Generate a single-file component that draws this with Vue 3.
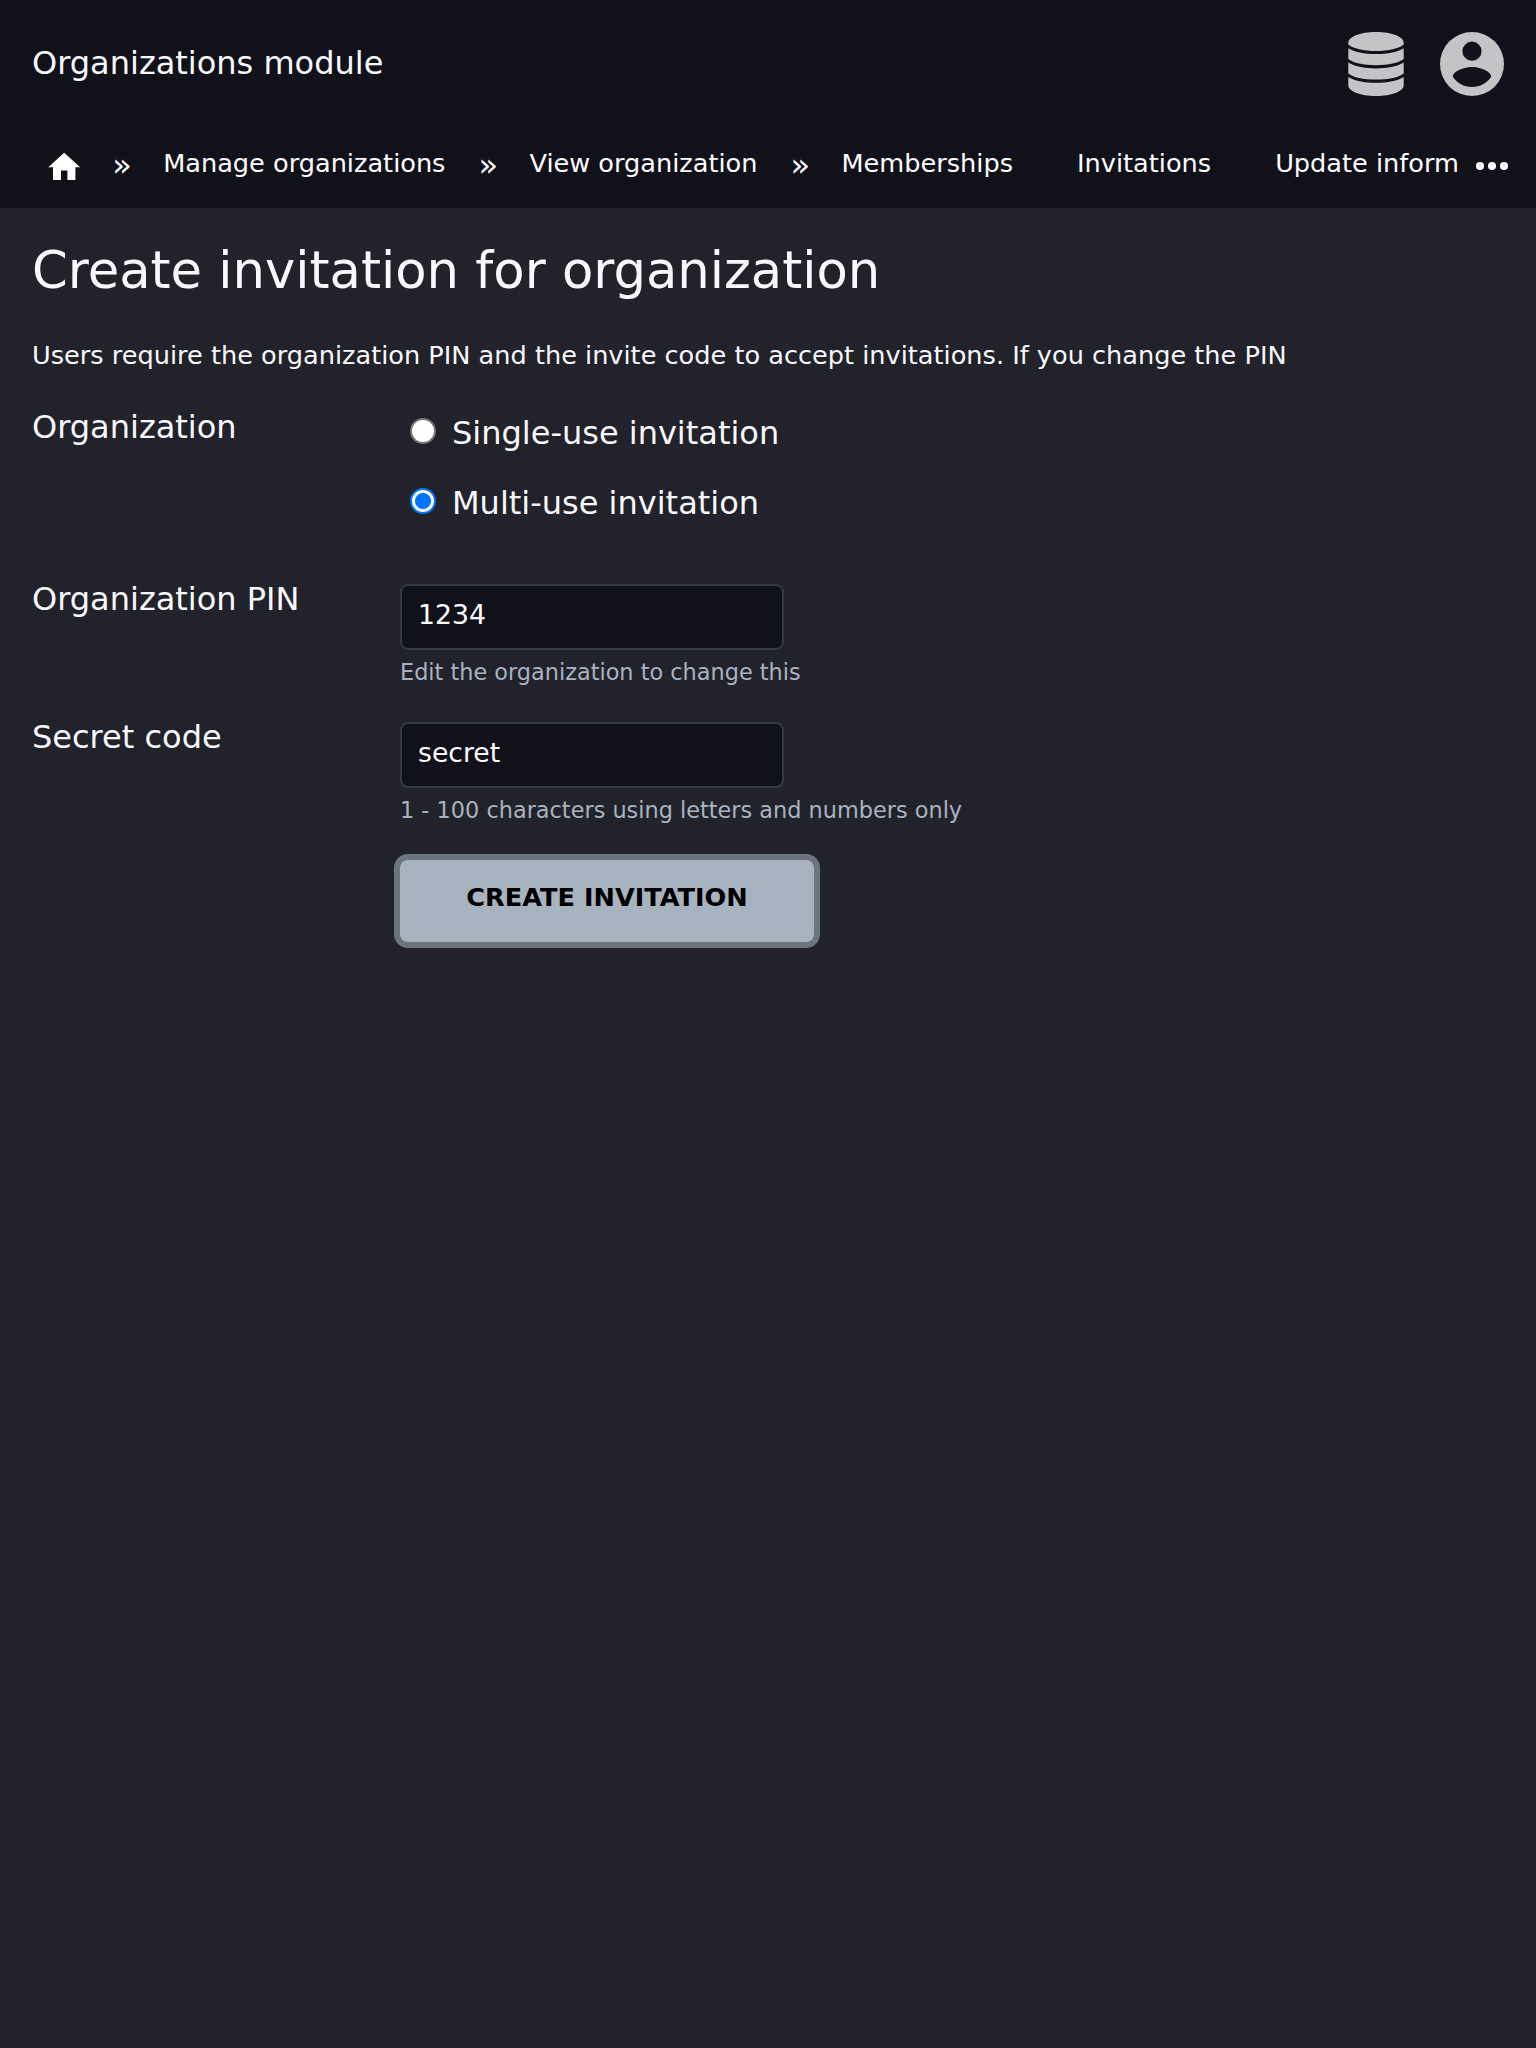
<script setup>
const crumbs = ['Manage organizations', 'View organization', 'Memberships']
const fields = [
  { id: 'pin', label: 'Organization PIN', value: '1234', hint: 'Edit the organization to change this' },
  { id: 'code', label: 'Secret code', value: 'secret', hint: '1 - 100 characters using letters and numbers only' },
]
const options = ['Single-use invitation', 'Multi-use invitation']
const selected = 1
</script>

<template>
  <div class="page">
    <header class="top">
      <div class="title">Organizations module</div>
      <div class="icons">
        <svg class="db" viewBox="0 0 56 64" width="56" height="64">
          <path d="M.3 10.500C.3 4.700 12.500 0 28 0s27.700 4.700 27.700 10.500v2C51 16.500 40.500 19 28 19S5 16.500.3 12.500z" />
          <path d="M.3 16.200C6 20 16 22 28 22s22-2 27.700-5.800v10.800C51 30.800 40.500 33.200 28 33.200S5 30.800.3 27z" />
          <path d="M.3 30.600C6 34.400 16 36.400 28 36.400s22-2 27.700-5.800v10.800C51 45.200 40.500 47.600 28 47.600S5 45.200.3 41.400z" />
          <path d="M.3 45C6 48.800 16 50.800 28 50.800s22-2 27.700-5.800v8.500C55.700 59.300 43.500 64 28 64S.3 59.300.3 53.500z" />
        </svg>
        <svg viewBox="2 2 20 20" width="64" height="64">
          <path fill-rule="evenodd" d="M12 2a10 10 0 1 0 0 20 10 10 0 0 0 0-20zm0 3a3 3 0 1 1 0 6 3 3 0 0 1 0-6zm0 14.200c-2.500 0-4.710-1.280-6-3.220.030-1.990 4-3.080 6-3.080 1.990 0 5.970 1.090 6 3.080-1.290 1.940-3.500 3.220-6 3.220z" />
        </svg>
      </div>
    </header>
    <nav class="nav">
      <svg class="home" viewBox="0 0 24 24" width="38.4" height="38.4">
        <path d="M10 20v-6h4v6h5v-8h3L12 3 2 12h3v8z" />
      </svg>
      <template v-for="c in crumbs" :key="c">
        <span class="sep">»</span>
        <a class="crumb">{{ c }}</a>
      </template>
      <a class="crumb tab">Invitations</a>
      <a class="crumb tab last">Update inform</a>
      <svg class="more" viewBox="0 0 32 8" width="32" height="8">
        <circle cx="4" cy="4" r="4" /><circle cx="16" cy="4" r="4" /><circle cx="28" cy="4" r="4" />
      </svg>
    </nav>
    <main>
      <h1>Create invitation for organization</h1>
      <p class="lead">Users require the organization PIN and the invite code to accept invitations. If you change the PIN</p>
      <div class="row choice">
        <div class="label">Organization</div>
        <div class="options">
          <label v-for="(o, i) in options" :key="o" class="option">
            <span class="radio" :class="{ on: i === selected }"></span>
            <span class="otext">{{ o }}</span>
          </label>
        </div>
      </div>
      <div v-for="f in fields" :key="f.id" class="row field">
        <label class="label" :for="f.id">{{ f.label }}</label>
        <div>
          <input :id="f.id" type="text" :value="f.value" />
          <div class="hint">{{ f.hint }}</div>
        </div>
      </div>
      <button>CREATE INVITATION</button>
    </main>
  </div>
</template>

<style>
body {
  margin: 0;
  background: #22222a;
}
</style>

<style scoped>
.page {
  min-height: 2048px;
  background: #22222a;
  color: #f8f9fc;
  font-family: "DejaVu Sans", sans-serif;
  font-size: 32px;
  overflow: hidden;
}
.top {
  height: 128px;
  padding: 0 32px;
  box-sizing: border-box;
  display: flex;
  justify-content: space-between;
  align-items: center;
  background: #11111a;
}
.title {
  line-height: 40px;
  margin-bottom: 3px;
}
.icons {
  display: flex;
  gap: 36px;
  fill: #c4c4c6;
}
.icons svg {
  display: block;
}
.nav {
  height: 80px;
  padding: 0 28px 0 44.800px;
  display: flex;
  align-items: flex-start;
  background: #11111a;
  fill: #fff;
  color: #fff;
}
.nav svg {
  flex: none;
}
.home {
  margin-top: 19.500px;
  margin-right: -4px;
}
.sep {
  width: 20px;
  margin: 18px 31px 0 33px;
  line-height: 38px;
  flex: none;
}
.crumb {
  margin-top: 20px;
  font-size: 25.600px;
  line-height: 30px;
  white-space: nowrap;
  flex: none;
}
.tab {
  margin-left: 64px;
}
.more {
  margin-top: 34px;
  margin-left: auto;
}
main {
  padding: 0 32px;
}
h1 {
  margin: 0;
  padding-top: 32px;
  font-size: 51.200px;
  font-weight: 400;
  line-height: 60px;
}
.lead {
  margin: 40px 0 0;
  font-size: 25.600px;
  line-height: 30px;
}
.row {
  display: grid;
  grid-template-columns: 368px 1fr;
}
.label {
  line-height: 38px;
}
.choice {
  margin-top: 38px;
  height: 176px;
}
.option {
  display: flex;
  height: 70px;
}
.radio {
  width: 26px;
  height: 26px;
  box-sizing: border-box;
  margin: 10px 16px 0 10px;
  border: 2px solid #767676;
  border-radius: 50%;
  background: #fff;
}
.radio.on {
  border-color: #0075ff;
  background: radial-gradient(circle, #0075ff 7.500px, #fff 8.500px);
}
.otext {
  margin-top: 6px;
  line-height: 38px;
}
.field {
  height: 138px;
}
.field .label {
  margin-top: -4px;
}
input {
  display: block;
  width: 384px;
  height: 66px;
  box-sizing: border-box;
  padding: 0 16px 6px;
  border: 2px solid #343a43;
  border-radius: 8px;
  background: #11111a;
  color: #fff;
  font: 26.667px "DejaVu Sans", sans-serif;
}
.hint {
  margin-top: 9px;
  font-size: 22.400px;
  line-height: 26px;
  color: #a8b3c0;
}
button {
  display: block;
  width: 414px;
  height: 82px;
  margin: 0 0 0 368px;
  padding: 0 0 8px;
  border: 0;
  border-radius: 8px;
  background: #a8b3c0;
  box-shadow: 0 0 0 6px #6c757d;
  color: #000;
  font: bold 25.600px "DejaVu Sans", sans-serif;
}
</style>
